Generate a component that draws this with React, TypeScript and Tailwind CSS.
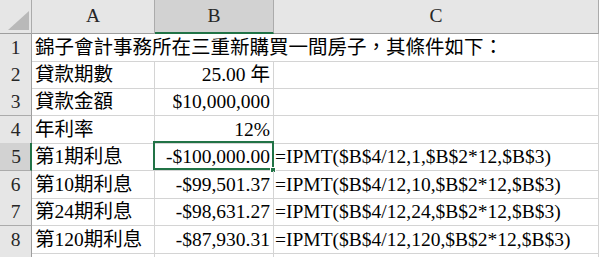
const rows: { h: string; a: string; b: string; c: string; sel?: boolean }[] = [
  { h: "h-[27px]", a: "貸款期數", b: "25.00 年", c: "" },
  { h: "h-[28px]", a: "貸款金額", b: "$10,000,000", c: "" },
  { h: "h-[27px]", a: "年利率", b: "12%", c: "" },
  { h: "h-[28px]", a: "第1期利息", b: "-$100,000.00", c: "=IPMT($B$4/12,1,$B$2*12,$B$3)", sel: true },
  { h: "h-[27px]", a: "第10期利息", b: "-$99,501.37", c: "=IPMT($B$4/12,10,$B$2*12,$B$3)" },
  { h: "h-[28px]", a: "第24期利息", b: "-$98,631.27", c: "=IPMT($B$4/12,24,$B$2*12,$B$3)" },
  { h: "h-[27px]", a: "第120期利息", b: "-$87,930.31", c: "=IPMT($B$4/12,120,$B$2*12,$B$3)" },
];

const grid = "grid grid-cols-[32px_123px_119px_325px_1px]";
const cell = "border-r border-b border-[#d4d4d4] whitespace-nowrap overflow-hidden leading-[27px]";

function RowHead({ n, sel }: { n: string; sel?: boolean }) {
  return (
    <div
      className={`flex justify-center border-b border-r leading-[27px] text-[#262626] ${
        sel ? "bg-[#d2d2d2] border-b-[#ababab] border-r-[#217346] border-r-2 pl-[2px]" : "bg-[#e6e6e6] border-[#ababab] border-r-[#9e9e9e]"
      }`}
    >
      {n}
    </div>
  );
}

export default function App() {
  return (
    <div className="w-[600px] h-[257px] overflow-hidden bg-white text-black text-[19.5px] font-['Liberation_Serif','Noto_Sans_CJK_TC',serif]">
      {/* column headers */}
      <div className={`${grid} h-[34px] text-[#262626]`}>
        <div className="bg-[#e6e6e6] border-r border-b border-[#ababab] border-b-[#9e9e9e]">
          <svg width="31" height="33" viewBox="0 0 31 33">
            <polygon points="29,11 29,30 8,30" fill="#b9b9b9" />
          </svg>
        </div>
        <div className="bg-[#e6e6e6] border-r border-b border-[#ababab] border-b-[#9e9e9e] flex items-end justify-center pb-[3px]">A</div>
        <div className="bg-[#d2d2d2] border-r border-[#ababab] border-b-2 border-b-[#217346] flex items-end justify-center pb-[2px]">B</div>
        <div className="bg-[#e6e6e6] border-r border-b border-[#ababab] border-b-[#9e9e9e] flex items-end justify-center pb-[3px]">C</div>
        <div className="bg-white" />
      </div>

      {/* row 1 */}
      <div className={`${grid} h-[27px]`}>
        <RowHead n="1" />
        <div className={`${cell} col-span-3 pl-[3px]`}>錦子會計事務所在三重新購買一間房子，其條件如下：</div>
        <div />
      </div>

      {rows.map((r, i) => (
        <div key={i} className={`${grid} ${r.h}`}>
          <RowHead n={String(i + 2)} sel={r.sel} />
          <div className={`${cell} pl-[3px]`}>{r.a}</div>
          <div className={`${cell} relative overflow-visible text-right pr-[3px]`}>
            {r.b}
            {r.sel && (
              <>
                <div className="absolute -left-[2px] -top-[2px] -right-[1px] bottom-0 border-2 border-[#217346]" />
                <div className="absolute -right-[3px] -bottom-[3px] w-[6px] h-[6px] bg-[#217346] border border-white" />
              </>
            )}
          </div>
          <div className={`${cell} pl-[1px]`}>{r.c}</div>
          <div />
        </div>
      ))}

      {/* row 9 partial */}
      <div className={`${grid} h-[10px]`}>
        <div className="bg-[#e6e6e6] border-r border-[#9e9e9e]" />
        <div className="border-r border-[#d4d4d4]" />
        <div className="border-r border-[#d4d4d4]" />
        <div className="border-r border-[#d4d4d4]" />
        <div />
      </div>
    </div>
  );
}
